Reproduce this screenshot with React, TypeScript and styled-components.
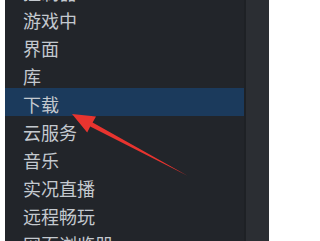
import React from "react";
import styled, { createGlobalStyle } from "styled-components";

const Global = createGlobalStyle`
  html, body { margin: 0; padding: 0; background: #ffffff; overflow: hidden; }
  #root { width: 277px; height: 241px; }
`;

const Frame = styled.div`
  position: relative;
  display: flex;
  width: 277px;
  height: 241px;
  overflow: hidden;
  background: #ffffff;
`;

const Gutter = styled.div<{ $w: number }>`
  flex: 0 0 ${(p) => p.$w}px;
  background: #ffffff;
`;

const Menu = styled.ul`
  flex: 0 0 241px;
  margin: 0;
  padding: 0;
  list-style: none;
  background: #22252a;
  border-right: 2px solid #1e2125;
  box-sizing: border-box;
  overflow: hidden;
`;

const MenuInner = styled.div`
  margin-top: -24px;
`;

const Item = styled.li<{ $active?: boolean }>`
  height: 28px;
  display: flex;
  align-items: center;
  padding: 3px 0 0 18px;
  box-sizing: border-box;
  font-family: "Noto Sans CJK SC", "Noto Sans", sans-serif;
  font-size: 18px;
  color: #c4c9cf;
  white-space: nowrap;
  background: ${(p) => (p.$active ? "#1b3a5c" : "transparent")};
`;

const SideBar = styled.div`
  flex: 0 0 23px;
  background: #2b2e33;
`;

const Arrow = styled.svg`
  position: absolute;
  left: 0;
  top: 0;
  pointer-events: none;
`;

const items = [
  "控制器",
  "游戏中",
  "界面",
  "库",
  "下载",
  "云服务",
  "音乐",
  "实况直播",
  "远程畅玩",
  "网页浏览器",
];

export default function App() {
  return (
    <>
      <Global />
      <Frame>
        <Gutter $w={5} />
        <Menu>
          <MenuInner>
            {items.map((t) => (
              <Item key={t} $active={t === "下载"}>
                {t}
              </Item>
            ))}
          </MenuInner>
        </Menu>
        <SideBar />
        <Gutter $w={8} />
        <Arrow width="277" height="241" viewBox="0 0 277 241">
          <polygon
            points="72,114 96,116.5 92.6,122.4 188,176 90.2,126.6 87.2,132.5"
            fill="#e8342f"
          />
        </Arrow>
      </Frame>
    </>
  );
}
